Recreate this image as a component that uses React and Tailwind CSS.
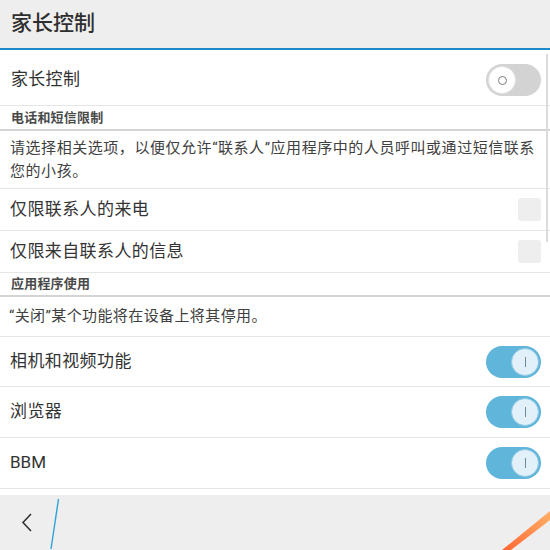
import React from "react";

const FONT = "font-['Roboto',_'Noto_Sans_CJK_SC',_sans-serif]";

function ToggleOff() {
  return (
    <div className="w-[55px] h-[32px] rounded-full bg-[#d3d3d3] flex items-center pl-[2px]">
      <div className="w-[28px] h-[28px] rounded-full bg-white border border-[#e2e2e2] flex items-center justify-center">
        <div className="w-[9px] h-[9px] rounded-full border border-[#7a7a7a]" />
      </div>
    </div>
  );
}

function ToggleOn() {
  return (
    <div className="w-[55px] h-[32px] rounded-full bg-[#60b5da] flex items-center justify-end pr-[2px]">
      <div className="w-[28px] h-[28px] rounded-full bg-[#e2f1f9] border border-[#8fc9e3] flex items-center justify-center">
        <div className="w-[1px] h-[10px] bg-[#6d8a99]" />
      </div>
    </div>
  );
}

function Checkbox() {
  return <div className="w-[23px] h-[23px] rounded-[3px] bg-[#eeeeee]" />;
}

export default function App() {
  return (
    <div className={`relative w-[550px] h-[550px] overflow-hidden bg-white flex flex-col ${FONT}`}>
      {/* Header */}
      <div className="h-[50px] shrink-0 bg-[#eeeeee] border-b-2 border-[#1a8bc8] flex items-center pl-[11px] pb-[1px]">
        <span className="text-[21px] font-medium text-[#2e2e2e]">家长控制</span>
      </div>

      {/* Parental control row */}
      <div className="h-[56px] shrink-0 border-b border-[#e6e6e6] flex items-center justify-between pl-[11px] pr-[9px] pt-[5px]">
        <span className="text-[17px] tracking-[0.3px] text-[#333]">家长控制</span>
        <ToggleOff />
      </div>

      {/* Section */}
      <div className="h-[25px] shrink-0 border-b-2 border-[#d4d4d4] flex items-center pl-[11px]">
        <span className="text-[13px] tracking-[0.2px] font-bold text-[#4a4a4a]">电话和短信限制</span>
      </div>

      <div className="h-[58px] shrink-0 border-b border-[#e6e6e6] flex items-center pl-[10px] pr-[8px]">
        <p className="text-[15px] leading-[23px] tracking-[0.55px] text-[#404040]">
          请选择相关选项，以便仅允许“联系人”应用程序中的人员呼叫或通过短信联系您的小孩。
        </p>
      </div>

      <div className="h-[42px] shrink-0 border-b border-[#e6e6e6] flex items-center justify-between pl-[10px] pr-[9px]">
        <span className="text-[17px] tracking-[0.4px] text-[#333]">仅限联系人的来电</span>
        <Checkbox />
      </div>

      <div className="h-[42px] shrink-0 border-b border-[#e6e6e6] flex items-center justify-between pl-[10px] pr-[9px]">
        <span className="text-[17px] tracking-[0.4px] text-[#333]">仅限来自联系人的信息</span>
        <Checkbox />
      </div>

      {/* Section 2 */}
      <div className="h-[24px] shrink-0 border-b-2 border-[#d4d4d4] flex items-center pl-[11px]">
        <span className="text-[13px] tracking-[0.2px] font-bold text-[#4a4a4a]">应用程序使用</span>
      </div>

      <div className="h-[40px] shrink-0 border-b border-[#e6e6e6] flex items-center pl-[9px]">
        <span className="text-[15px] tracking-[0.4px] text-[#404040]">“关闭”某个功能将在设备上将其停用。</span>
      </div>

      <div className="h-[50px] shrink-0 border-b border-[#e6e6e6] flex items-center justify-between pl-[10px] pr-[9px]">
        <span className="text-[17px] tracking-[0.4px] text-[#333]">相机和视频功能</span>
        <ToggleOn />
      </div>
      <div className="h-[51px] shrink-0 border-b border-[#e6e6e6] flex items-center justify-between pl-[10px] pr-[9px]">
        <span className="text-[17px] tracking-[0.4px] text-[#333]">浏览器</span>
        <ToggleOn />
      </div>
      <div className="h-[51px] shrink-0 border-b border-[#e6e6e6] flex items-center justify-between pl-[10px] pr-[9px]">
        <span className="text-[17px] text-[#333]">BBM</span>
        <ToggleOn />
      </div>

      <div className="flex-1" />

      {/* Bottom bar */}
      <div className="h-[55px] shrink-0 bg-[#eeeeee] relative">
        <svg className="absolute left-0 top-0" width="550" height="55" viewBox="0 0 550 55">
          <polyline points="31,19 23,27.5 31,36" fill="none" stroke="#333" strokeWidth="1.6" />
          <line x1="58.5" y1="4" x2="51" y2="54" stroke="#2aa3d8" strokeWidth="1.4" />
          <defs>
            <linearGradient id="wm" x1="0" y1="1" x2="1" y2="0">
              <stop offset="0" stopColor="#ff6633" />
              <stop offset="1" stopColor="#ffb066" />
            </linearGradient>
          </defs>
          <polygon points="502,55 511,55 550,25 550,16" fill="url(#wm)" />
        </svg>
      </div>

      {/* Scrollbar */}
      <div className="absolute left-[546px] top-[54px] w-[1.5px] h-[188px] bg-[#dcdcdc]" />
    </div>
  );
}
